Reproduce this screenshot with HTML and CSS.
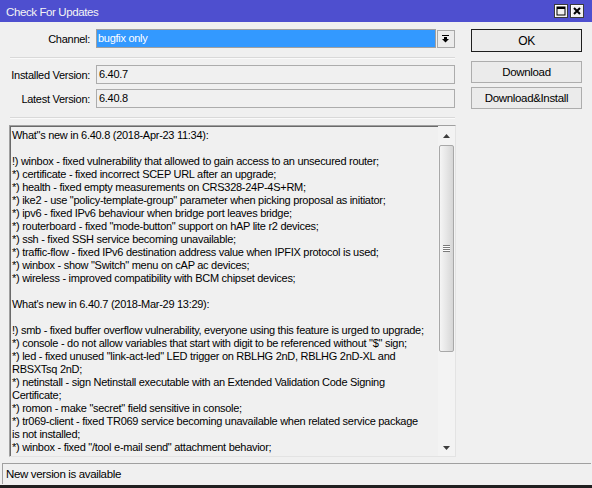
FILE: index.html
```html
<!DOCTYPE html>
<html>
<head>
<meta charset="utf-8">
<link rel="stylesheet" href="styles.css">
</head>
<body>
<div class="window">
  <div class="titlebar">
    <span class="title">Check For Updates</span>
    <div class="tb-buttons">
      <span class="tb-btn"><svg width="10" height="10" viewBox="0 0 10 10"><rect x="1" y="1" width="8" height="8" fill="none" stroke="#000" stroke-width="1"/><rect x="1" y="1" width="8" height="2" fill="#000"/></svg></span>
      <span class="tb-btn"><svg width="10" height="10" viewBox="0 0 10 10"><path d="M2 2 L8 8 M8 2 L2 8" stroke="#000" stroke-width="2"/></svg></span>
    </div>
  </div>
  <div class="top">
    <div class="form">
      <div class="row">
        <span class="lbl">Channel:</span>
        <div class="select">bugfix only</div>
        <div class="drop"><svg width="8" height="8" viewBox="0 0 8 8"><rect x="0" y="0" width="7" height="1" fill="#000"/><rect x="2" y="2" width="3" height="2" fill="#000"/><polygon points="0,4 7,4 3.5,7.5" fill="#000"/></svg></div>
      </div>
      <div class="sep"></div>
      <div class="row">
        <span class="lbl">Installed Version:</span>
        <div class="field">6.40.7</div>
      </div>
      <div class="row row-next">
        <span class="lbl">Latest Version:</span>
        <div class="field">6.40.8</div>
      </div>
      <div class="sep"></div>
    </div>
    <div class="buttons">
      <div class="btn btn-default">OK</div>
      <div class="btn btn-first">Download</div>
      <div class="btn btn-second">Download&amp;Install</div>
    </div>
  </div>
  <div class="log">
    <div class="log-text">
      <div class="line">What"s new in 6.40.8 (2018-Apr-23 11:34):</div>
      <div class="line">&nbsp;</div>
      <div class="line">!) winbox - fixed vulnerability that allowed to gain access to an unsecured router;</div>
      <div class="line">*) certificate - fixed incorrect SCEP URL after an upgrade;</div>
      <div class="line">*) health - fixed empty measurements on CRS328-24P-4S+RM;</div>
      <div class="line">*) ike2 - use "policy-template-group" parameter when picking proposal as initiator;</div>
      <div class="line">*) ipv6 - fixed IPv6 behaviour when bridge port leaves bridge;</div>
      <div class="line">*) routerboard - fixed "mode-button" support on hAP lite r2 devices;</div>
      <div class="line">*) ssh - fixed SSH service becoming unavailable;</div>
      <div class="line">*) traffic-flow - fixed IPv6 destination address value when IPFIX protocol is used;</div>
      <div class="line">*) winbox - show "Switch" menu on cAP ac devices;</div>
      <div class="line">*) wireless - improved compatibility with BCM chipset devices;</div>
      <div class="line">&nbsp;</div>
      <div class="line">What's new in 6.40.7 (2018-Mar-29 13:29):</div>
      <div class="line">&nbsp;</div>
      <div class="line">!) smb - fixed buffer overflow vulnerability, everyone using this feature is urged to upgrade;</div>
      <div class="line">*) console - do not allow variables that start with digit to be referenced without "$" sign;</div>
      <div class="line">*) led - fixed unused "link-act-led" LED trigger on RBLHG 2nD, RBLHG 2nD-XL and</div>
      <div class="line">RBSXTsq 2nD;</div>
      <div class="line">*) netinstall - sign Netinstall executable with an Extended Validation Code Signing</div>
      <div class="line">Certificate;</div>
      <div class="line">*) romon - make "secret" field sensitive in console;</div>
      <div class="line">*) tr069-client - fixed TR069 service becoming unavailable when related service package</div>
      <div class="line">is not installed;</div>
      <div class="line">*) winbox - fixed "/tool e-mail send" attachment behavior;</div>
    </div>
    <div class="scrollbar">
      <div class="sb-arrow"><svg width="7" height="4" viewBox="0 0 7 4"><polygon points="3.5,0 7,4 0,4" fill="#3c3c3c"/></svg></div>
      <div class="sb-track">
        <div class="sb-thumb">
          <div class="grip"></div>
        </div>
      </div>
      <div class="sb-arrow"><svg width="7" height="4" viewBox="0 0 7 4"><polygon points="0,0 7,0 3.5,4" fill="#3c3c3c"/></svg></div>
    </div>
  </div>
  <div class="status">New version is available</div>
</div>
</body>
</html>
```

FILE: styles.css
```css
html, body {
  margin: 0;
  padding: 0;
}
body {
  font-family: "Liberation Sans", Arial, sans-serif;
  font-size: 11px;
  letter-spacing: -0.28px;
  color: #000;
  background: #f0f0f0;
}
.window {
  width: 592px;
  height: 488px;
  box-sizing: border-box;
  background: #f0f0f0;
  display: flex;
  flex-direction: column;
  border-bottom: 3px solid #202020;
  overflow: hidden;
}
.titlebar {
  height: 22px;
  flex: none;
  background: #4e4fcf;
  display: flex;
  align-items: center;
  padding: 0 8px 0 6px;
}
.title {
  color: #f4f4f4;
  font-size: 11.5px;
  letter-spacing: -0.4px;
  padding-top: 2px;
}
.tb-buttons {
  margin-left: auto;
  display: flex;
  gap: 2px;
}
.tb-btn {
  width: 14px;
  height: 14px;
  box-sizing: border-box;
  border: 1px solid #3a3a3a;
  background: #f0f0f0;
  box-shadow: inset 1px 1px 0 #fff;
  display: flex;
  align-items: center;
  justify-content: center;
}
.top {
  display: flex;
  padding-left: 10px;
  margin-top: 7px;
  flex: none;
}
.form {
  width: 445px;
}
.row {
  display: flex;
  align-items: center;
  height: 19px;
}
.row-next {
  margin-top: 5px;
}
.lbl {
  width: 80px;
  margin-right: 6px;
  text-align: right;
  white-space: nowrap;
}
.select {
  width: 340px;
  height: 19px;
  box-sizing: border-box;
  border: 1px solid #a0a0a0;
  background: #3399ff;
  color: #fff;
  padding-left: 1px;
  line-height: 17px;
}
.drop {
  width: 18px;
  height: 18px;
  box-sizing: border-box;
  margin-left: 1px;
  border: 1px solid #a8a8a8;
  background: #ececec;
  display: flex;
  align-items: center;
  justify-content: center;
}
.field {
  flex: 1;
  height: 19px;
  box-sizing: border-box;
  border: 1px solid #acacac;
  padding-left: 2px;
  line-height: 17px;
}
.sep {
  margin-top: 9px;
  margin-bottom: 6px;
  height: 1px;
  background: #d9d9d9;
  border-bottom: 1px solid #fafafa;
}
.buttons {
  margin-left: 16px;
  width: 111px;
  display: flex;
  flex-direction: column;
}
.btn {
  height: 22px;
  box-sizing: border-box;
  border: 1px solid #adadad;
  background: #ebebeb;
  display: flex;
  align-items: center;
  justify-content: center;
  font-size: 11.5px;
  letter-spacing: -0.35px;
}
.btn-default {
  height: 23px;
  border-color: #1e1e1e;
  font-size: 12px;
}
.btn-first {
  margin-top: 9px;
}
.btn-second {
  margin-top: 4px;
}
.log {
  margin-left: 9px;
  width: 447px;
  height: 332px;
  flex: none;
  box-sizing: border-box;
  border-top: 1px solid #a0a0a0;
  border-left: 1px solid #a0a0a0;
  border-right: 1px solid #e3e3e3;
  border-bottom: 1px solid #e3e3e3;
  box-shadow: inset 1px 1px 0 #6a6a6a;
  display: flex;
}
.log-text {
  flex: 1;
  padding: 3px 0 0 2px;
  overflow: hidden;
  line-height: 13px;
}
.line {
  white-space: nowrap;
}
.scrollbar {
  width: 17px;
  display: flex;
  flex-direction: column;
  background: #f3f3f3;
  padding-top: 1px;
}
.sb-arrow {
  height: 17px;
  display: flex;
  align-items: center;
  justify-content: center;
  flex: none;
}
.sb-track {
  flex: 1;
  padding: 1px 1px 0 1px;
}
.sb-thumb {
  height: 207px;
  box-sizing: border-box;
  border: 1px solid #a8a8a8;
  border-radius: 2px;
  background: linear-gradient(to right, #f5f5f5, #e6e6e6 50%, #d6d6d6);
  display: flex;
  align-items: center;
  justify-content: center;
}
.grip {
  width: 7px;
  height: 7px;
  background: repeating-linear-gradient(to bottom, #7a7a7a 0 1px, #fdfdfd 1px 2px);
}
.status {
  margin-top: 6px;
  margin-left: 2px;
  margin-right: 1px;
  height: 21px;
  flex: none;
  box-sizing: border-box;
  border-top: 1px solid #a0a0a0;
  border-left: 1px solid #a0a0a0;
  padding-left: 3px;
  line-height: 20px;
  font-size: 11.5px;
  letter-spacing: -0.35px;
}
```
